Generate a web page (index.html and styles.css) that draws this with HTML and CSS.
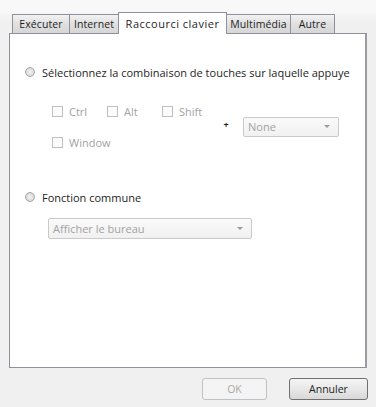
FILE: index.html
```html
<!DOCTYPE html>
<html lang="fr">
<head>
<meta charset="utf-8">
<title>Raccourci clavier</title>
<link rel="stylesheet" href="styles.css">
</head>
<body>
<div class="dialog">
  <div class="tabs">
    <div class="tab t-exec">Exécuter</div>
    <div class="tab t-net">Internet</div>
    <div class="tab tab-active t-key">Raccourci clavier</div>
    <div class="tab t-multi">Multimédia</div>
    <div class="tab t-other">Autre</div>
  </div>
  <div class="panel">
    <div class="radio-row">
      <span class="radio"></span>
      <span class="label">Sélectionnez la combinaison de touches sur laquelle appuye</span>
    </div>
    <div class="keys">
      <div class="mods">
        <div class="check-row">
          <div class="check"><span class="box"></span><span class="dis">Ctrl</span></div>
          <div class="check"><span class="box"></span><span class="dis">Alt</span></div>
          <div class="check"><span class="box"></span><span class="dis">Shift</span></div>
        </div>
        <div class="check-row">
          <div class="check"><span class="box"></span><span class="dis">Window</span></div>
        </div>
      </div>
      <div class="plus">+</div>
      <div class="select select-key">
        <span class="dis">None</span>
        <span class="arrow"></span>
      </div>
    </div>
    <div class="radio-row radio-row-2">
      <span class="radio"></span>
      <span class="label">Fonction commune</span>
    </div>
    <div class="select select-func">
      <span class="dis">Afficher le bureau</span>
      <span class="arrow"></span>
    </div>
  </div>
  <div class="buttons">
    <div class="btn btn-disabled">OK</div>
    <div class="btn btn-default">Annuler</div>
  </div>
</div>
</body>
</html>
```
FILE: styles.css
```css
* { box-sizing: border-box; }
html, body { margin: 0; padding: 0; }
body {
  background: #f0f0f0;
  font-family: "Open Sans", "Liberation Sans", sans-serif;
  font-size: 11px;
  color: #1e1e1e;
  width: 376px;
  height: 407px;
  overflow: hidden;
}
.dialog {
  padding: 12px 0 0 9px;
  background: linear-gradient(#f8f8f8 0, #f8f8f8 10px, #f0f0f0 22px);
  height: 407px;
}
.tabs {
  display: flex;
  align-items: flex-end;
  height: 21px;
  padding-left: 3px;
}
.tab {
  height: 19px;
  border: 1px solid #8e9199;
  border-bottom: none;
  border-right: none;
  background: linear-gradient(#f2f2f2, #e0e0e0 50%, #d6d6d6);
  display: flex;
  align-items: center;
  justify-content: center;
  line-height: 1;
  font-size: 10.5px;
  letter-spacing: 0.1px;
}
.t-exec { width: 57px; }
.t-net { width: 49px; }
.t-key { width: 109px; }
.t-multi { width: 63px; border-left: none; }
.t-other { width: 45px; border-right: 1px solid #8e9199; }
.tab-active {
  height: 22px;
  background: #fff;
  border-right: 1px solid #8e9199;
  margin-bottom: -1px;
  position: relative;
  z-index: 1;
  font-size: 11px;
  letter-spacing: 0.5px;
}
.panel {
  width: 358px;
  height: 335px;
  border: 1px solid #8e9199;
  border-right: 2px solid #9a9ca2;
  background: #fff;
  padding: 31px 0 0 15px;
}
.radio-row {
  display: flex;
  align-items: center;
  height: 14px;
  gap: 7px;
}
.radio {
  width: 10px;
  height: 10px;
  border-radius: 50%;
  border: 1px solid #a8a8a8;
  background: radial-gradient(circle at 50% 50%, #f4f4f4 0, #dcdcdc 60%, #c8c8c8 100%);
  flex: none;
}
.label {
  font-size: 11px;
  letter-spacing: 0;
  white-space: nowrap;
}
.keys {
  display: flex;
  align-items: center;
  margin: 26px 0 0 27px;
}
.mods {
  width: 170px;
  display: flex;
  flex-direction: column;
  gap: 19px;
}
.check-row {
  display: flex;
  height: 12px;
}
.check {
  width: 55px;
  display: flex;
  align-items: center;
  gap: 6px;
}
.box {
  width: 11px;
  height: 11px;
  border: 1px solid #c0c0c0;
  background: #fbfbfb;
  flex: none;
}
.dis {
  color: #a2a2a2;
  letter-spacing: 0;
  white-space: nowrap;
}
.plus {
  width: 8px;
  font-size: 9px;
  font-weight: bold;
  text-align: center;
  color: #222;
  margin-top: -4px;
}
.select {
  height: 20px;
  border: 1px solid #cacaca;
  border-radius: 2px;
  background: linear-gradient(#fafafa, #f1f1f1);
  display: flex;
  align-items: center;
  justify-content: space-between;
  padding: 0 8px 0 4px;
}
.select-key {
  width: 96px;
  margin-left: 13px;
}
.select-func {
  width: 204px;
  height: 21px;
  margin: 14px 0 0 23px;
}
.arrow {
  width: 0;
  height: 0;
  border-left: 3px solid transparent;
  border-right: 3px solid transparent;
  border-top: 3px solid #9a9a9a;
}
.radio-row-2 {
  margin-top: 42px;
}
.buttons {
  width: 359px;
  display: flex;
  justify-content: flex-end;
  gap: 22px;
  margin-top: 10px;
}
.btn {
  height: 22px;
  border-radius: 3px;
  display: flex;
  align-items: center;
  justify-content: center;
  font-size: 10.5px;
  letter-spacing: 0;
}
.btn-disabled {
  width: 65px;
  border: 1px solid #bfc2c4;
  background: #f4f4f4;
  color: #a8a8a8;
}
.btn-default {
  width: 79px;
  border: 1px solid #707070;
  background: linear-gradient(#f4f4f4, #e8e8e8 50%, #d9d9d9);
  color: #1e1e1e;
}
```
